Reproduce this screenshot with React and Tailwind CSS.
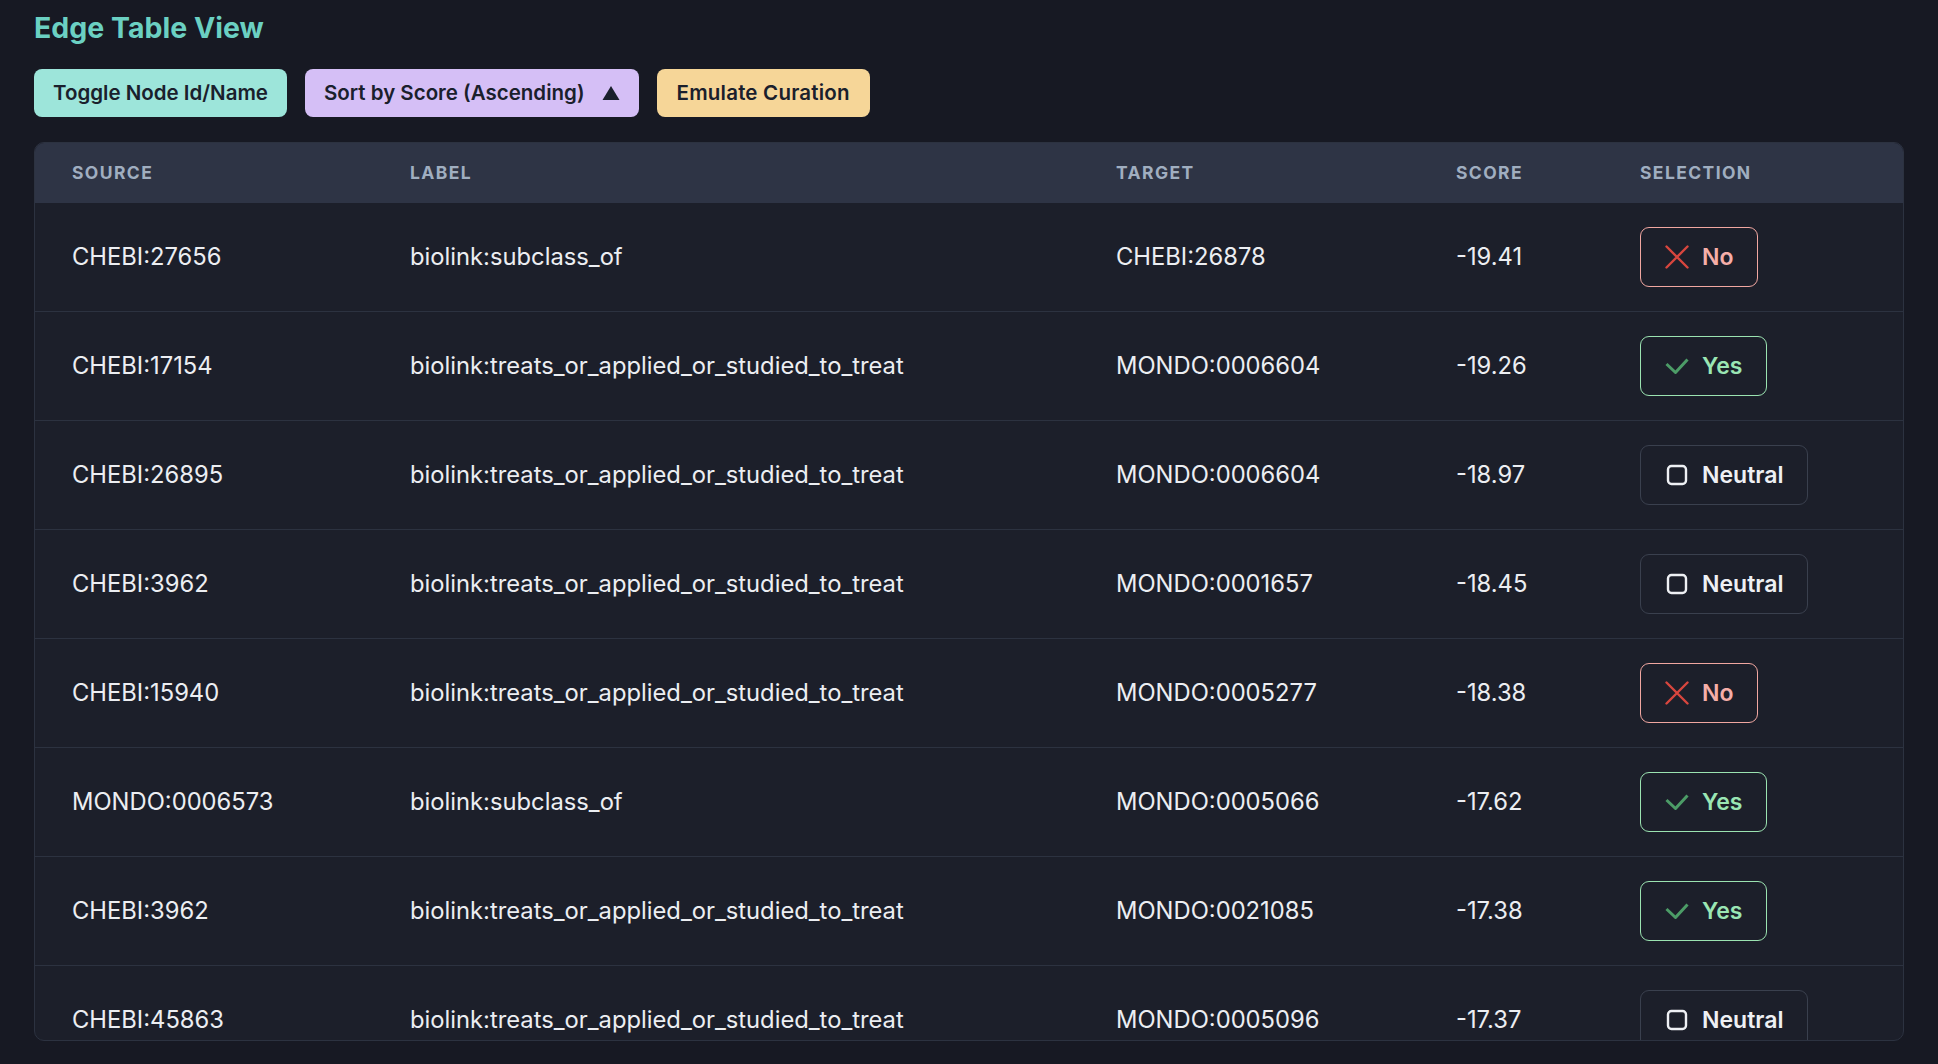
import { useState } from 'react';

const ROWS = [
  { source: 'CHEBI:27656', label: 'biolink:subclass_of', target: 'CHEBI:26878', score: '-19.41', sel: 'no' },
  { source: 'CHEBI:17154', label: 'biolink:treats_or_applied_or_studied_to_treat', target: 'MONDO:0006604', score: '-19.26', sel: 'yes' },
  { source: 'CHEBI:26895', label: 'biolink:treats_or_applied_or_studied_to_treat', target: 'MONDO:0006604', score: '-18.97', sel: 'neutral' },
  { source: 'CHEBI:3962', label: 'biolink:treats_or_applied_or_studied_to_treat', target: 'MONDO:0001657', score: '-18.45', sel: 'neutral' },
  { source: 'CHEBI:15940', label: 'biolink:treats_or_applied_or_studied_to_treat', target: 'MONDO:0005277', score: '-18.38', sel: 'no' },
  { source: 'MONDO:0006573', label: 'biolink:subclass_of', target: 'MONDO:0005066', score: '-17.62', sel: 'yes' },
  { source: 'CHEBI:3962', label: 'biolink:treats_or_applied_or_studied_to_treat', target: 'MONDO:0021085', score: '-17.38', sel: 'yes' },
  { source: 'CHEBI:45863', label: 'biolink:treats_or_applied_or_studied_to_treat', target: 'MONDO:0005096', score: '-17.37', sel: 'neutral' },
];

const CloseIcon = () => (
  <svg width="24" height="24" viewBox="0 0 24 24" fill="none" stroke="#d8463e" strokeWidth="2.4" strokeLinecap="round">
    <path d="M1.5 1.5 22.5 22.5M22.5 1.5 1.5 22.5" />
  </svg>
);

const CheckIcon = () => (
  <svg width="24" height="16" viewBox="0 0 24 16" fill="none" stroke="#4c9c67" strokeWidth="3" strokeLinejoin="round">
    <polyline points="1.5,6 10.5,14.5 22.5,1.5" />
  </svg>
);

const SquareIcon = () => (
  <svg width="24" height="24" viewBox="0 0 24 24" fill="none" stroke="#eef0f4" strokeWidth="2.4">
    <rect x="3" y="3" width="18" height="18" rx="3.5" />
  </svg>
);

const SelectionButton = ({ value }) => {
  if (value === 'no') {
    return (
      <button className="flex items-center gap-[13px] h-[60px] px-[24px] rounded-[9px] border border-[#f1a7a1] text-[#f5aea8] text-[23px] font-semibold">
        <CloseIcon />
        No
      </button>
    );
  }
  if (value === 'yes') {
    return (
      <button className="flex items-center gap-[13px] h-[60px] px-[24px] rounded-[9px] border border-[#9be3b1] text-[#9ae6b4] text-[23px] font-semibold">
        <CheckIcon />
        Yes
      </button>
    );
  }
  return (
    <button className="flex items-center gap-[13px] h-[60px] px-[24px] rounded-[9px] border border-[#3a404e] text-[#eef0f4] text-[23px] font-semibold">
      <SquareIcon />
      Neutral
    </button>
  );
};

export default function App() {
  const [rows] = useState(ROWS);

  return (
    <div className="min-h-screen h-[1064px] bg-[#171923] px-[34px] pt-[11px] font-[Inter,sans-serif] overflow-hidden">
      <h1 className="text-[28.5px] leading-[34px] font-bold text-[#6bd0c2]">Edge Table View</h1>

      <div className="mt-[24px] flex gap-[18px]">
        <button className="h-[48px] px-[19px] rounded-[8px] bg-[#9de5da] text-[#1a202c] text-[20.5px] font-semibold">
          Toggle Node Id/Name
        </button>
        <button className="h-[48px] px-[19px] rounded-[8px] bg-[#d5bff6] text-[#1a202c] text-[20.5px] font-semibold flex items-center gap-[17px]">
          Sort by Score (Ascending)
          <svg width="18" height="16" viewBox="0 0 18 16" fill="#1a202c">
            <polygon points="9,1 17.5,15 0.5,15" />
          </svg>
        </button>
        <button className="h-[48px] px-[20px] rounded-[8px] bg-[#f6d698] text-[#1a202c] text-[20.5px] font-semibold tracking-[0.01em]">
          Emulate Curation
        </button>
      </div>

      <div className="mt-[25px] h-[899px] overflow-hidden rounded-[10px] border border-[#2c3240] bg-[#1c1f2a]">
        <table className="w-full table-fixed border-collapse">
          <colgroup>
            <col className="w-[338px]" />
            <col className="w-[706px]" />
            <col className="w-[340px]" />
            <col className="w-[184px]" />
            <col />
          </colgroup>
          <thead>
            <tr className="bg-[#2e3445] h-[60px]">
              {['Source', 'Label', 'Target', 'Score', 'Selection'].map((h) => (
                <th key={h} className="text-left pl-[37px] pr-[24px] text-[17.5px] font-bold uppercase tracking-[0.08em] text-[#a0aec0]">
                  {h}
                </th>
              ))}
            </tr>
          </thead>
          <tbody>
            {rows.map((row, index) => (
              <tr key={index} className="border-b border-[#2c3240] text-[23.75px] text-[#eceef2]">
                <td className="pl-[37px] pr-[24px] py-[24px] whitespace-nowrap">{row.source}</td>
                <td className="pl-[37px] pr-[24px] py-[24px] whitespace-nowrap">{row.label}</td>
                <td className="pl-[37px] pr-[24px] py-[24px] whitespace-nowrap">{row.target}</td>
                <td className="pl-[37px] pr-[24px] py-[24px] whitespace-nowrap">{row.score}</td>
                <td className="pl-[37px] pr-[24px] py-[24px]">
                  <SelectionButton value={row.sel} />
                </td>
              </tr>
            ))}
          </tbody>
        </table>
      </div>
    </div>
  );
}
